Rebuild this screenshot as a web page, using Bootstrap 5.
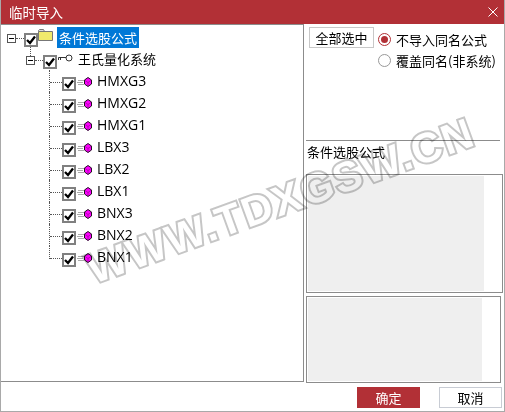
<!DOCTYPE html>
<html lang="zh">
<head>
<meta charset="utf-8">
<title>临时导入</title>
<link href="https://cdn.jsdelivr.net/npm/bootstrap@5.3.0/dist/css/bootstrap.min.css" rel="stylesheet">
<style>
html,body{margin:0;height:412px;width:505px;overflow:hidden;background:#fff}
body{font-family:"Noto Sans CJK SC","Noto Sans",sans-serif;font-size:13px;line-height:20px;color:#000}
.win{position:relative;width:505px;height:412px;border:solid #a9a9a9;border-width:0 1px 1px 1px;overflow:hidden}
.tbar{height:24px;margin:0 -1px;background:#b23036;color:#fff;padding:0 7px 0 9px;line-height:24px;font-size:13.5px}
.tclose{width:10px;height:10px}
.mainrow{height:358px}
.treebox{width:303px;flex:none;border:solid #8c8c8c;border-width:1px 1px 1px 0;padding:1px 0 0 6px}
.trow{height:22px}
.ex{width:9px;height:9px;border:1px solid #555;background:#fff;position:relative;flex:none;margin-top:3px}
.ex::after{content:"";position:absolute;left:1px;right:1px;top:3px;height:1px;background:#000}
.hdot{border-top:1px dotted #555;height:0;width:8px;flex:none;margin-top:3px}
.ck{width:14px;height:14px;border:2px solid #808080;background:#fff;flex:none;display:flex;align-items:center;justify-content:center;margin-top:6px}
.ck svg{width:10px;height:10px;display:block}
.vconn{width:13px;height:22px;flex:none;border-left:1px dotted #555;position:relative}
.vconn.endc{height:13px;align-self:flex-start}
.vconn::after{content:"";position:absolute;left:0;right:0;top:12px;border-top:1px dotted #555}
.lvl1{margin-left:19px;position:relative}
.lvl1::before{content:"";position:absolute;left:4px;top:-1px;height:9px;border-left:1px dotted #555}
.leaves{margin-left:23px}
.foldic{margin:0 4px 4px 0;flex:none}
.keyic{margin:0 5px 2px 1px;flex:none}
.leafic{margin:2px 5px 0 1px;flex:none}
.selname{background:#0078d7;color:#fff;padding:0 2px;height:21px;line-height:21px}
.ltxt{font-family:"Open Sans","Noto Sans CJK SC",sans-serif;font-size:14px;color:#000}
.sidepane{width:200px;flex:none;padding:3px 0 0 2px}
.headblk{height:113px}
.allbtn{width:65px;height:21px;border:1px solid #c8c8c8;background:#fff;border-radius:0;padding:0;font-size:13px;line-height:19px;color:#000;margin-left:3px;flex:none}
.radiox{width:13px;height:13px;border:1px solid #999;border-radius:50%;background:#fff;flex:none;position:relative}
.radiox.on{border-color:#b23036}
.radiox.on::after{content:"";position:absolute;left:2px;top:2px;width:7px;height:7px;border-radius:50%;background:#b23036}
.optcol{margin-left:4px;padding-top:2px}
.optline{height:21px;gap:5px;white-space:nowrap}
.hrule{border-top:1px solid #8c8c8c;margin-right:4px;padding-left:1px;height:34px;line-height:22px}
.gbox1{height:119px;border:1px solid #8c8c8c;padding:1px 18px 1px 1px;margin:0 1px 3px 0}
.gbox2{height:87px;border:1px solid #8c8c8c;padding:1px 18px 1px 1px;margin-right:3px}
.gfill{background:#efefef;height:100%}
.foot{height:28px;padding:5px 2px 0 0}
.okbtn,.cancelbtn{width:63px;height:21px;border-radius:0;padding:0;font-size:13px;line-height:19px}
.okbtn{background:#b23036;border:1px solid #b23036;color:#fff}
.cancelbtn{background:#fff;border:1px solid #c8ccd4;color:#000;margin-left:19px}
.wmark{position:absolute;left:70px;top:176px;width:420px;text-align:center;font-family:"Liberation Sans",sans-serif;font-weight:700;font-size:42px;line-height:50px;letter-spacing:2px;color:#fff;-webkit-text-stroke:4px #c6c6c6;paint-order:stroke fill;mix-blend-mode:multiply;transform:rotate(-20deg);pointer-events:none;white-space:nowrap}
</style>
</head>
<body>
<svg width="0" height="0" class="position-absolute">
  <defs>
    <symbol id="tick" viewBox="0 0 10 10"><path d="M1 5l3 3 5-6.500" fill="none" stroke="#000" stroke-width="2.300"/></symbol>
    <symbol id="gem" viewBox="0 0 15 10"><path d="M1 3.500h6M0 5.500h6M1 7.500h6" stroke="#aaa" fill="none"/><path d="M11 .5l3.500 2.500v4L11 9.500 7.500 7V3z" fill="#f0f" stroke="#201020"/><path d="M7.500 3L11 5.500 14.500 3M11 5.500v4" fill="none" stroke="#901090" stroke-width=".7"/></symbol>
  </defs>
</svg>
<div class="win">
  <div class="tbar d-flex align-items-center justify-content-between">
    <span>临时导入</span>
    <svg class="tclose" viewBox="0 0 10 10"><path d="M.5.5l9 9M9.500.5l-9 9" stroke="#fff" stroke-width="1" fill="none"/></svg>
  </div>
  <div class="d-flex mainrow">
    <div class="treebox">
      <div class="trow d-flex align-items-center">
        <span class="ex"></span><span class="hdot"></span>
        <span class="ck"><svg><use href="#tick"/></svg></span>
        <svg class="foldic" width="15" height="12" viewBox="0 0 15 12"><path d="M.5 2.500V1.500l1-1h4l1 2" fill="#ddd" stroke="#777"/><path d="M.5 2.500h14v9H.5z" fill="#f0ea6c" stroke="#777"/></svg>
        <span class="selname">条件选股公式</span>
      </div>
      <div class="lvl1">
        <div class="trow d-flex align-items-center">
          <span class="ex"></span><span class="hdot"></span>
          <span class="ck"><svg><use href="#tick"/></svg></span>
          <svg class="keyic" width="15" height="8" viewBox="0 0 15 8"><circle cx="11" cy="4" r="3" fill="#fff" stroke="#333"/><path d="M8 3.500H.5M2.500 3.500V6M.5 3.500V6" stroke="#333" fill="none"/></svg>
          <span>王氏量化系统</span>
        </div>
        <div class="leaves">
          <div class="trow d-flex align-items-center"><span class="vconn"></span><span class="ck"><svg><use href="#tick"/></svg></span><svg class="leafic" width="15" height="10"><use href="#gem"/></svg><span class="ltxt">HMXG3</span></div>
          <div class="trow d-flex align-items-center"><span class="vconn"></span><span class="ck"><svg><use href="#tick"/></svg></span><svg class="leafic" width="15" height="10"><use href="#gem"/></svg><span class="ltxt">HMXG2</span></div>
          <div class="trow d-flex align-items-center"><span class="vconn"></span><span class="ck"><svg><use href="#tick"/></svg></span><svg class="leafic" width="15" height="10"><use href="#gem"/></svg><span class="ltxt">HMXG1</span></div>
          <div class="trow d-flex align-items-center"><span class="vconn"></span><span class="ck"><svg><use href="#tick"/></svg></span><svg class="leafic" width="15" height="10"><use href="#gem"/></svg><span class="ltxt">LBX3</span></div>
          <div class="trow d-flex align-items-center"><span class="vconn"></span><span class="ck"><svg><use href="#tick"/></svg></span><svg class="leafic" width="15" height="10"><use href="#gem"/></svg><span class="ltxt">LBX2</span></div>
          <div class="trow d-flex align-items-center"><span class="vconn"></span><span class="ck"><svg><use href="#tick"/></svg></span><svg class="leafic" width="15" height="10"><use href="#gem"/></svg><span class="ltxt">LBX1</span></div>
          <div class="trow d-flex align-items-center"><span class="vconn"></span><span class="ck"><svg><use href="#tick"/></svg></span><svg class="leafic" width="15" height="10"><use href="#gem"/></svg><span class="ltxt">BNX3</span></div>
          <div class="trow d-flex align-items-center"><span class="vconn"></span><span class="ck"><svg><use href="#tick"/></svg></span><svg class="leafic" width="15" height="10"><use href="#gem"/></svg><span class="ltxt">BNX2</span></div>
          <div class="trow d-flex align-items-center"><span class="vconn endc"></span><span class="ck"><svg><use href="#tick"/></svg></span><svg class="leafic" width="15" height="10"><use href="#gem"/></svg><span class="ltxt">BNX1</span></div>
        </div>
      </div>
    </div>
    <div class="sidepane">
      <div class="d-flex headblk">
        <button class="allbtn btn" type="button">全部选中</button>
        <div class="optcol">
          <div class="optline d-flex align-items-center"><span class="radiox on"></span><span>不导入同名公式</span></div>
          <div class="optline d-flex align-items-center"><span class="radiox"></span><span>覆盖同名(非系统)</span></div>
        </div>
      </div>
      <div class="hrule">条件选股公式</div>
      <div class="gbox1"><div class="gfill"></div></div>
      <div class="gbox2"><div class="gfill"></div></div>
    </div>
  </div>
  <div class="foot d-flex justify-content-end">
    <button class="okbtn btn" type="button">确定</button>
    <button class="cancelbtn btn" type="button">取消</button>
  </div>
  <div class="wmark">WWW.TDXGSW.CN</div>
</div>
</body>
</html>
